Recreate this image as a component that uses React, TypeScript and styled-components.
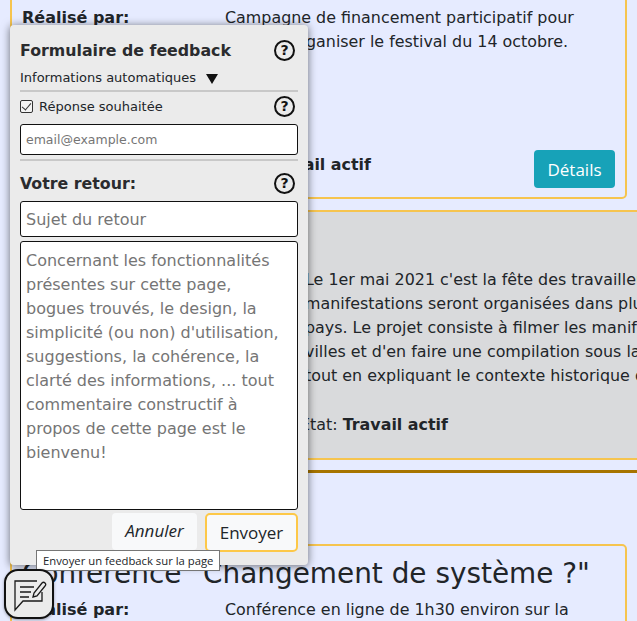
import styled, { createGlobalStyle } from "styled-components";

const Global = createGlobalStyle`
  html, body {
    margin: 0;
    height: 100%;
    overflow: hidden;
    background: #e6ebff;
  }
  body {
    font-family: "DejaVu Sans", Verdana, sans-serif;
    font-size: 16px;
    color: #212529;
  }
`;

const Page = styled.div`
  width: 637px;
  height: 621px;
  overflow: hidden;
  position: relative;
`;

const Stack = styled.div`
  margin-top: -19px;
  display: flex;
  flex-direction: column;
`;

const Card = styled.section`
  box-sizing: border-box;
  margin: 0 10px;
  padding: 23px 10px 9px;
  border: 2px solid #f6c44f;
  border-radius: 5px;
`;

const MutedCard = styled(Card)`
  margin: 11px -40px 0 10px;
  padding: 56px 0 21px 293px;
  background: #d9dadc;
`;

const TitledCard = styled(Card)`
  margin-top: 71px;
  padding-top: 8px;
`;

const CardTitle = styled.h2`
  margin: 0 0 4px;
  height: 40px;
  font-size: 27.9px;
  font-weight: 400;
  line-height: 40px;
  white-space: nowrap;
`;

const Columns = styled.div`
  display: grid;
  grid-template-columns: 203px 1fr;
`;

const Label = styled.div`
  font-weight: 700;
  line-height: 24px;
`;

const Body = styled.p`
  margin: 0;
  line-height: 24px;
  font-size: 15.9px;
`;

const Lines = styled(Body)`
  white-space: nowrap;
`;

const Status = styled(Body)<{ $left: number; $top: number }>`
  margin: ${(p) => p.$top}px 0 0 ${(p) => p.$left}px;
`;

const CardFoot = styled.div`
  display: flex;
  align-items: flex-start;
  justify-content: space-between;
  margin-top: 96px;
`;

const Details = styled.button`
  width: 81px;
  height: 38px;
  border: 0;
  border-radius: 4px;
  background: #17a2b8;
  color: #fff;
  font: 17px "Open Sans", sans-serif;
`;

const Rule = styled.hr`
  margin: 10px 0 0 10px;
  border: 0;
  height: 3px;
  background: #a67400;
`;

const Panel = styled.aside`
  position: absolute;
  left: 10px;
  top: 25px;
  box-sizing: border-box;
  width: 298px;
  height: 540px;
  padding: 10px 10px 0;
  border-radius: 4px;
  background: #ebebeb;
  box-shadow: 0 1px 8px rgba(0, 0, 0, 0.55);
  display: flex;
  flex-direction: column;
  font-size: 13px;
`;

const Row = styled.div<{ $height: number; $top?: number }>`
  box-sizing: border-box;
  height: ${(p) => p.$height}px;
  flex: none;
  display: flex;
  align-items: center;
  justify-content: space-between;
  padding: ${(p) => p.$top ?? 0}px 3px 0 0;
`;

const PanelTitle = styled.h3`
  margin: 0;
  font-size: 15.8px;
  font-weight: 700;
  color: #2a2b2e;
`;

const Help = styled.span`
  box-sizing: border-box;
  width: 21px;
  height: 21px;
  border: 2px solid #111;
  border-radius: 50%;
  font: 700 14px/17px "DejaVu Sans", sans-serif;
  text-align: center;
  color: #111;
`;

const Disclosure = styled.div`
  display: flex;
  align-items: center;
  gap: 10px;
  height: 24px;
  flex: none;
`;

const Triangle = styled.span`
  width: 0;
  height: 0;
  border-left: 6px solid transparent;
  border-right: 6px solid transparent;
  border-top: 10px solid #111;
  margin-top: 4px;
`;

const Divider = styled.div<{ $top: number }>`
  height: 2px;
  flex: none;
  margin-top: ${(p) => p.$top}px;
  background: #c8c8c8;
`;

const Check = styled.label`
  display: flex;
  align-items: center;
  gap: 6px;
`;

const Box = styled.input`
  appearance: none;
  position: relative;
  box-sizing: border-box;
  margin: 0;
  width: 13px;
  height: 13px;
  border: 1px solid #333;
  border-radius: 2px;
  background: #f4f4f4;
  &::after {
    content: "";
    position: absolute;
    left: 3px;
    top: 0;
    width: 4px;
    height: 8px;
    border: solid #333;
    border-width: 0 1px 1px 0;
    transform: rotate(40deg);
  }
`;

const Field = styled.div<{ $height: number; $size: number; $line: number; $top?: number; $gap?: number }>`
  box-sizing: border-box;
  flex: none;
  height: ${(p) => p.$height}px;
  margin-top: ${(p) => p.$gap ?? 0}px;
  padding: ${(p) => p.$top ?? 0}px 5px 0;
  border: 1px solid #111;
  border-radius: 3px;
  background: #fff;
  color: #757575;
  font-size: ${(p) => p.$size}px;
  line-height: ${(p) => p.$line}px;
`;

const Buttons = styled.div`
  display: flex;
  justify-content: flex-end;
  align-items: flex-start;
  gap: 8px;
  margin-top: 3px;
`;

const Cancel = styled.button`
  width: 85px;
  height: 37px;
  padding: 0 0 2px;
  border: 0;
  border-radius: 4px;
  background: #f8f9fa;
  color: #212529;
  font: italic 17px "Open Sans", sans-serif;
`;

const Send = styled.button`
  box-sizing: border-box;
  width: 93px;
  height: 39px;
  padding: 0;
  border: 2px solid #fdc848;
  border-radius: 5px;
  background: #f8f9fa;
  color: #212529;
  font: 17px "Open Sans", sans-serif;
`;

const Tip = styled.div`
  position: absolute;
  left: 36px;
  top: 550px;
  box-sizing: border-box;
  width: 184px;
  height: 21px;
  padding: 0 6px;
  border: 1px solid #767676;
  background: #fff;
  font: 11.3px/19px "Open Sans", sans-serif;
  white-space: nowrap;
`;

const FeedbackButton = styled.button`
  position: absolute;
  left: 4px;
  top: 569px;
  box-sizing: border-box;
  width: 50px;
  height: 50px;
  padding: 0;
  border: 2px solid #111;
  border-radius: 14px;
  background: #ebebeb;
  box-shadow: 0 1px 3px rgba(0, 0, 0, 0.35);
  display: flex;
  align-items: center;
  justify-content: center;
`;

export default function App() {
  return (
    <Page>
      <Global />
      <Stack>
        <Card>
          <Columns>
            <Label>Réalisé par:</Label>
            <Body>
              Campagne de financement participatif pour
              <br />
              pouvoir organiser le festival du 14 octobre.
            </Body>
          </Columns>
          <CardFoot>
            <Status $left={201} $top={3}>
              État: <b>Travail actif</b>
            </Status>
            <Details>Détails</Details>
          </CardFoot>
        </Card>
        <MutedCard>
          <Lines>
            Le 1er mai 2021 c'est la fête des travailleurs
            <br />
            manifestations seront organisées dans plusieurs
            <br />
            pays. Le projet consiste à filmer les manifestations
            <br />
            villes et d'en faire une compilation sous la
            <br />
            tout en expliquant le contexte historique de
          </Lines>
          <Status $left={-5} $top={25}>
            État: <b>Travail actif</b>
          </Status>
        </MutedCard>
        <Rule />
        <TitledCard>
          <CardTitle>Conférence "Changement de système ?"</CardTitle>
          <Columns>
            <Label>Réalisé par:</Label>
            <Body>Conférence en ligne de 1h30 environ sur la</Body>
          </Columns>
        </TitledCard>
      </Stack>

      <Panel>
        <Row $height={30}>
          <PanelTitle>Formulaire de feedback</PanelTitle>
          <Help>?</Help>
        </Row>
        <Disclosure>
          Informations automatiques
          <Triangle />
        </Disclosure>
        <Divider $top={1} />
        <Row $height={28}>
          <Check>
            <Box type="checkbox" defaultChecked />
            Réponse souhaitée
          </Check>
          <Help>?</Help>
        </Row>
        <Field $height={31} $size={12.5} $line={29} $gap={4}>
          email@example.com
        </Field>
        <Divider $top={4} />
        <Row $height={40} $top={5}>
          <PanelTitle>Votre retour:</PanelTitle>
          <Help>?</Help>
        </Row>
        <Field $height={36} $size={16} $line={35}>
          Sujet du retour
        </Field>
        <Field $height={269} $size={16} $line={24} $top={7} $gap={4}>
          Concernant les fonctionnalités présentes sur cette page, bogues trouvés, le design, la
          simplicité (ou non) d'utilisation, suggestions, la cohérence, la clarté des informations,
          ... tout commentaire constructif à propos de cette page est le bienvenu!
        </Field>
        <Buttons>
          <Cancel>Annuler</Cancel>
          <Send>Envoyer</Send>
        </Buttons>
      </Panel>

      <Tip>Envoyer un feedback sur la page</Tip>
      <FeedbackButton aria-label="Envoyer un feedback">
        <svg width="46" height="46" viewBox="2 2 46 46" fill="none" stroke="#1a1a1a" strokeWidth="1.3">
          <path d="M33 12H11v29l8-9h19V23" />
          <path d="M16 18h14M16 23h11M16 28h9" />
          <path d="M29 28l1-4 8-10q1.500-1.500 3 0t0 3L33 27z" />
        </svg>
      </FeedbackButton>
    </Page>
  );
}
